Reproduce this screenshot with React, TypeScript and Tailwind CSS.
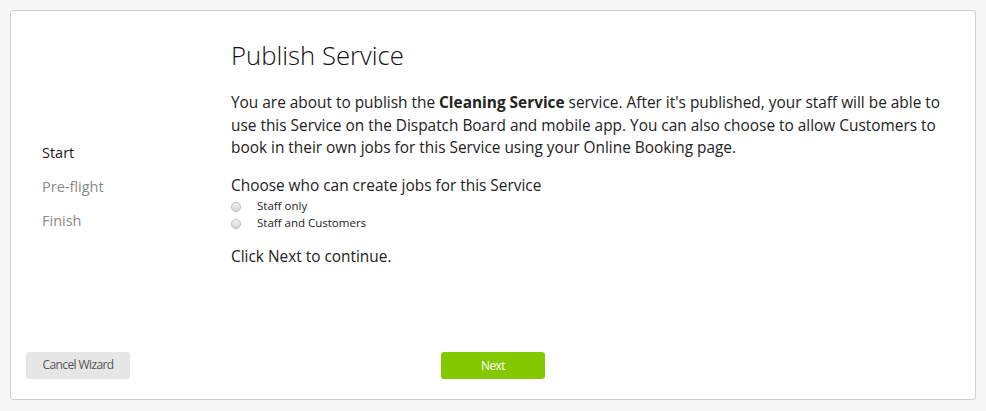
import React from "react";

export default function App() {
  const font = { fontFamily: '"Open Sans", "Noto Sans", sans-serif' };
  return (
    <div className="w-[986px] h-[411px] bg-[#f7f7f7] p-[10px]" style={font}>
      <div className="w-[966px] h-[390px] bg-white border border-[#cfcfcf] rounded-[3px] flex flex-col">
        <div className="flex">
          <div className="w-[220px] pl-[31px] pt-[125px] flex flex-col text-[14.5px] leading-[34px]">
            <div className="text-[#1a1a1a]">Start</div>
            <div className="text-[#8a8a8a]">Pre-flight</div>
            <div className="text-[#8a8a8a]">Finish</div>
          </div>
          <div className="w-[718px] pt-[29px] text-[#222]">
            <h1 className="text-[25.7px] leading-[31px] font-light text-[#111]">Publish Service</h1>
            <p className="mt-[21px] text-[15.4px] leading-[22.5px]">
              You are about to publish the <b className="font-bold">Cleaning Service</b> service. After it's published, your staff will be able to use this Service on the Dispatch Board and mobile app. You can also choose to allow Customers to book in their own jobs for this Service using your Online Booking page.
            </p>
            <div className="mt-[15px] text-[15.4px] leading-[22px]">Choose who can create jobs for this Service</div>
            <div className="flex flex-col text-[11.5px] leading-[17px] text-[#222]">
              <label className="flex items-center gap-[16px]">
                <span className="w-[10px] h-[10px] rounded-full border border-[#bdbdbd] bg-gradient-to-b from-[#f2f2f2] to-[#d6d6d6] mt-[3px]" />
                <span>Staff only</span>
              </label>
              <label className="flex items-center gap-[16px]">
                <span className="w-[10px] h-[10px] rounded-full border border-[#bdbdbd] bg-gradient-to-b from-[#f2f2f2] to-[#d6d6d6] mt-[3px]" />
                <span>Staff and Customers</span>
              </label>
            </div>
            <div className="mt-[15.5px] text-[15.4px] leading-[22px]">Click Next to continue.</div>
          </div>
        </div>
        <div className="mt-auto pb-[20px] grid grid-cols-[1fr_auto_1fr] items-start">
          <div className="pl-[15px]">
            <button className="w-[104px] h-[27px] bg-[#e6e6e6] rounded-[3px] text-[12px] tracking-[-0.6px] text-[#555]">Cancel Wizard</button>
          </div>
          <button className="mt-px w-[104px] h-[27px] bg-[#84c800] rounded-[3px] text-[12px] tracking-[-0.6px] text-white">Next</button>
          <div />
        </div>
      </div>
    </div>
  );
}
